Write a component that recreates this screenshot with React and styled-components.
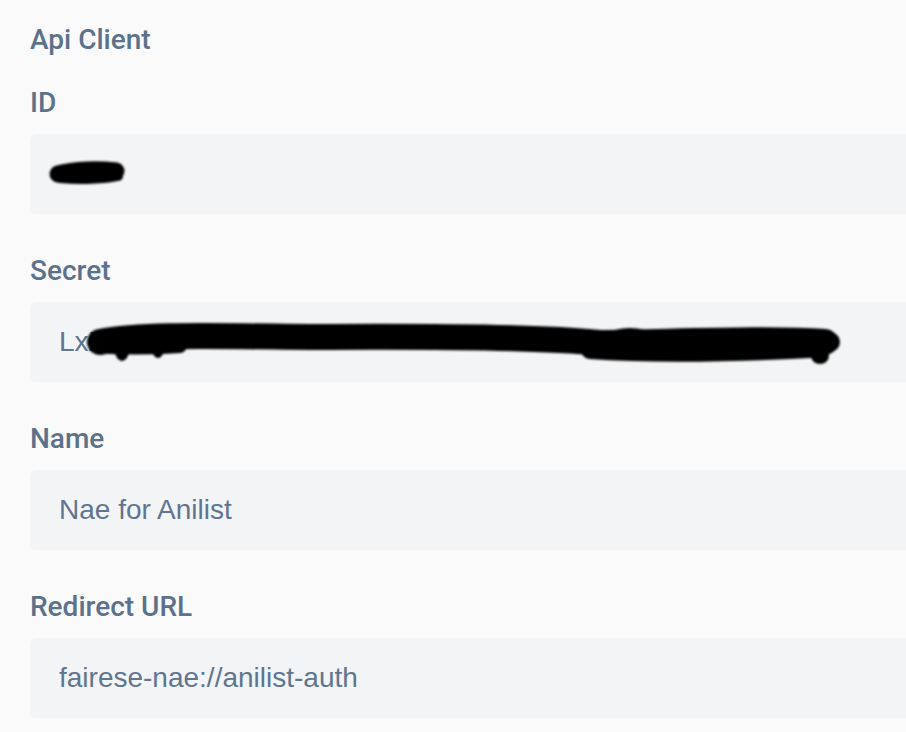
import styled, { createGlobalStyle } from 'styled-components';

const Global = createGlobalStyle`
  html, body {
    margin: 0;
    padding: 0;
    background: #fafafa;
    overflow: hidden;
  }
`;

const Page = styled.div`
  width: 940px;
  padding: 22px 0 0 30px;
  box-sizing: border-box;
  font-family: Roboto, "Liberation Sans", sans-serif;
`;

const Heading = styled.h2`
  margin: 0 0 27px;
  font-size: 28px;
  line-height: 36px;
  font-weight: 500;
  color: #5c728a;
`;

const Field = styled.div`
  display: flex;
  flex-direction: column;
  gap: 13px;
  margin-bottom: 39px;
`;

const Label = styled.label`
  font-size: 28px;
  line-height: 36px;
  font-weight: 500;
  color: #5c728a;
`;

const Box = styled.div`
  position: relative;
  height: 80px;
  display: flex;
  align-items: center;
  padding-left: 29px;
  background: #f3f4f6;
  border-radius: 6px;
  font-family: "Liberation Sans", Arial, sans-serif;
  font-size: 28px;
  color: #5f7590;
  white-space: nowrap;
  overflow: hidden;
`;

const Scribble = styled.svg`
  position: absolute;
  left: 0;
  top: 0;
  filter: blur(0.9px);
`;

const IdScribble = () => (
  <Scribble width="140" height="80" viewBox="0 0 140 80">
    <path d="M28 40 C45 35 70 35 86 37" stroke="#000" strokeWidth="17" strokeLinecap="round" fill="none" />
    <path d="M30 44 C50 46 75 45 88 42" stroke="#000" strokeWidth="10" strokeLinecap="round" fill="none" />
  </Scribble>
);

const SecretScribble = () => (
  <Scribble width="860" height="80" viewBox="0 0 860 80">
    <path d="M70 40 C110 32 180 34 280 35 C420 34 520 36 570 41 C650 40 740 36 795 40" stroke="#000" strokeWidth="26" strokeLinecap="round" fill="none" />
    <path d="M66 44 C90 46 120 46 150 44" stroke="#000" strokeWidth="14" strokeLinecap="round" fill="none" />
    <path d="M560 48 C620 52 700 51 780 47" stroke="#000" strokeWidth="18" strokeLinecap="round" fill="none" />
    <ellipse cx="92" cy="44" rx="8" ry="15" fill="#000" />
    <ellipse cx="128" cy="42" rx="7" ry="14" fill="#000" />
    <ellipse cx="800" cy="40" rx="10" ry="10" fill="#000" />
    <ellipse cx="790" cy="54" rx="9" ry="8" fill="#000" />
    <ellipse cx="600" cy="32" rx="20" ry="6" fill="#000" />
  </Scribble>
);

const fields = [
  { label: 'ID', value: '', mark: <IdScribble /> },
  { label: 'Secret', value: 'LxZ', mark: <SecretScribble /> },
  { label: 'Name', value: 'Nae for Anilist' },
  { label: 'Redirect URL', value: 'fairese-nae://anilist-auth' },
];

export default function App() {
  return (
    <Page>
      <Global />
      <Heading>Api Client</Heading>
      {fields.map((f) => (
        <Field key={f.label}>
          <Label>{f.label}</Label>
          <Box>
            {f.value}
            {f.mark}
          </Box>
        </Field>
      ))}
    </Page>
  );
}
